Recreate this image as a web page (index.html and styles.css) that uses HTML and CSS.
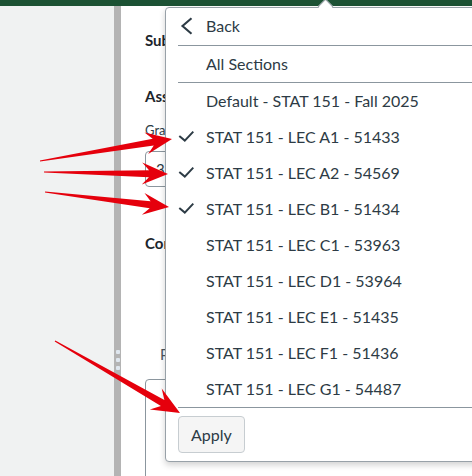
FILE: index.html
```html
<!DOCTYPE html>
<html lang="en">
<head>
<meta charset="utf-8">
<title>Section filter</title>
<link rel="stylesheet" href="styles.css">
</head>
<body>
<div class="page">
  <div class="topbar"></div>
  <div class="main">
    <aside class="sidebar"></aside>
    <div class="divider">
      <span class="grip"></span><span class="grip"></span><span class="grip"></span>
    </div>
    <section class="content">
      <h2 class="heading first">Submission</h2>
      <h2 class="heading second">Assessment</h2>
      <div class="label">Grade out of 10</div>
      <div class="input">3</div>
      <h2 class="heading third">Comments</h2>
      <div class="tab">Private comments</div>
      <div class="box"></div>
    </section>
  </div>

  <div class="menu">
    <span class="caret"></span>
    <div class="row back">
      <span class="slot"><svg width="16" height="18" viewBox="0 0 16 18"><path d="M13.5 1.2 L4.5 9 L13.5 16.8" fill="none" stroke="#2d3b45" stroke-width="2.1"/></svg></span>
      <span>Back</span>
    </div>
    <div class="sep"></div>
    <div class="row"><span class="slot"></span><span>All Sections</span></div>
    <div class="sep"></div>
    <div class="row"><span class="slot"></span><span>Default - STAT 151 - Fall 2025</span></div>
    <div class="row"><span class="slot"><svg class="check" width="16" height="16" viewBox="0 0 16 16"><path d="M1.3 7 L6.8 11.6 L15.3 2.6" fill="none" stroke="#2d3b45" stroke-width="2"/></svg></span><span>STAT 151 - LEC A1 - 51433</span></div>
    <div class="row"><span class="slot"><svg class="check" width="16" height="16" viewBox="0 0 16 16"><path d="M1.3 7 L6.8 11.6 L15.3 2.6" fill="none" stroke="#2d3b45" stroke-width="2"/></svg></span><span>STAT 151 - LEC A2 - 54569</span></div>
    <div class="row"><span class="slot"><svg class="check" width="16" height="16" viewBox="0 0 16 16"><path d="M1.3 7 L6.8 11.6 L15.3 2.6" fill="none" stroke="#2d3b45" stroke-width="2"/></svg></span><span>STAT 151 - LEC B1 - 51434</span></div>
    <div class="row"><span class="slot"></span><span>STAT 151 - LEC C1 - 53963</span></div>
    <div class="row"><span class="slot"></span><span>STAT 151 - LEC D1 - 53964</span></div>
    <div class="row"><span class="slot"></span><span>STAT 151 - LEC E1 - 51435</span></div>
    <div class="row"><span class="slot"></span><span>STAT 151 - LEC F1 - 51436</span></div>
    <div class="row"><span class="slot"></span><span>STAT 151 - LEC G1 - 54487</span></div>
    <div class="sep"></div>
    <div class="footer"><button class="apply" type="button">Apply</button></div>
  </div>

  <svg class="arrows" width="472" height="476" viewBox="0 0 472 476">
    <polygon points="172,139 148.2,154.1 153.8,145.6 40.1,161.6 39.9,160.4 152.7,138.7 144.5,132.4"/>
    <polygon points="168,174 141.8,184.6 148.9,177.2 44,172.6 44,171.4 149.1,170.2 142.2,162.6"/>
    <polygon points="169,207 141.9,214.8 149.7,208.2 44.9,192.6 45.1,191.4 150.6,201.3 144.5,193"/>
    <polygon points="180,413 149.8,409.4 160.9,406.1 54.7,341.5 55.3,340.5 164.4,400 161.7,388.6"/>
  </svg>
</div>
</body>
</html>
```
FILE: styles.css
```css
* { box-sizing: border-box; }
html, body { margin: 0; padding: 0; }
body {
  font-family: Lato, "Noto Sans", "Liberation Sans", sans-serif;
  color: #2d3b45;
  background: #fff;
}
.page {
  position: relative;
  width: 472px;
  height: 476px;
  overflow: hidden;
}
.topbar {
  height: 6px;
  background: #1c5234;
}
.main {
  display: flex;
  height: 470px;
  overflow: hidden;
}
.sidebar {
  flex: 0 0 114px;
  background: #f0f2f2;
}
.divider {
  flex: 0 0 7px;
  background: #b4b4b4;
  display: flex;
  flex-direction: column;
  align-items: center;
  gap: 4px;
  padding-top: 344px;
}
.grip {
  width: 4px;
  height: 4px;
  background: #dfe7ef;
  border-radius: 1px;
}
.content {
  flex: 1 1 auto;
  min-width: 0;
  padding-left: 24px;
  display: flex;
  flex-direction: column;
  align-items: flex-start;
}
.content > * { flex-shrink: 0; }
.heading {
  margin: 0;
  font-size: 15px;
  font-weight: 700;
  line-height: 20px;
  color: #1c252c;
  white-space: nowrap;
}
.first { margin-top: 24px; }
.second { margin-top: 36px; }
.label {
  margin-top: 16px;
  font-size: 13px;
  line-height: 16px;
  white-space: nowrap;
}
.input {
  margin-top: 13px;
  width: 320px;
  height: 36px;
  border: 1px solid #8b969e;
  border-radius: 4px;
  padding-left: 10px;
  font-size: 15px;
  line-height: 34px;
}
.third { margin-top: 46px; }
.tab {
  margin-top: 91px;
  padding-left: 15px;
  font-size: 15px;
  line-height: 20px;
  color: #4a5560;
  white-space: nowrap;
}
.box {
  margin-top: 15px;
  width: 400px;
  height: 200px;
  border: 1px solid #8b969e;
  border-radius: 4px;
}

/* popup menu overlaying the page */
.menu {
  position: absolute;
  left: 165px;
  top: 7px;
  width: 330px;
  background: #fff;
  border: 1px solid #98a1a8;
  border-radius: 4px;
  box-shadow: 0 3px 6px rgba(0, 0, 0, 0.18);
  font-size: 16px;
  white-space: nowrap;
}
.caret {
  position: absolute;
  left: 154px;
  top: -7px;
  width: 11px;
  height: 11px;
  background: #fff;
  border-top: 1px solid #98a1a8;
  border-left: 1px solid #98a1a8;
  transform: rotate(45deg);
}
.row {
  display: flex;
  align-items: center;
  height: 36px;
  padding-left: 12px;
  padding-bottom: 1px;
  line-height: 20px;
}
.row.back { height: 37px; padding-bottom: 2px; }
.slot {
  width: 28px;
  display: flex;
  align-items: center;
}
.check { display: block; }
.sep {
  height: 1px;
  margin-left: 12px;
  background: #8b969e;
}
.footer {
  padding: 8px 0 8px 12px;
}
.apply {
  display: block;
  height: 37px;
  padding: 0 12px;
  font-family: inherit;
  font-size: 16px;
  color: #2d3b45;
  background: #f5f5f5;
  border: 1px solid #c7cdd1;
  border-radius: 4px;
}
.arrows {
  position: absolute;
  left: 0;
  top: 0;
  fill: #e5000c;
  pointer-events: none;
}
```
